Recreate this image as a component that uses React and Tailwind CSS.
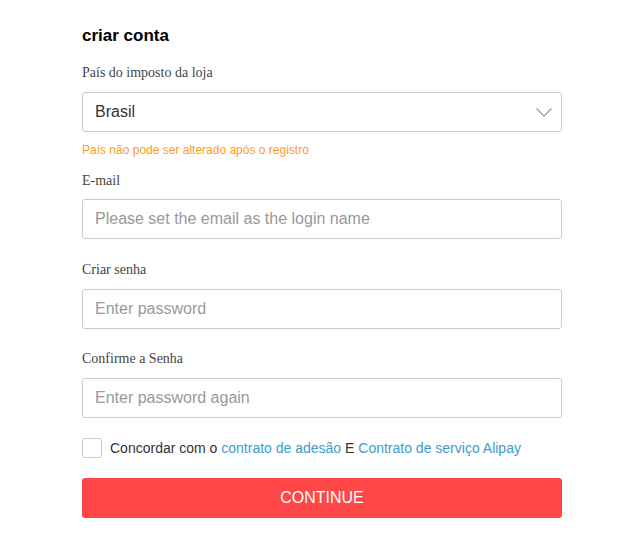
import React from 'react';

const Label = ({ children, className = '' }) => (
  <div className={`h-5 text-[14px] leading-5 text-[#444] font-['Liberation_Serif',serif] ${className}`}>
    {children}
  </div>
);

const Input = ({ placeholder, type = 'text' }) => (
  <input
    type={type}
    placeholder={placeholder}
    className="block w-full h-10 px-3 rounded-[3px] border border-[#c9ccd2] bg-white text-[16px] text-[#333] placeholder:text-[#999] outline-none"
  />
);

export default function App() {
  return (
    <div className="min-h-screen bg-white font-['Liberation_Sans',Arial,sans-serif]">
      <div className="ml-[82px] w-[480px] pt-[24px]">
        <h1 className="h-6 text-[17px] leading-6 font-bold text-black">criar conta</h1>

        <Label className="mt-[15px]">País do imposto da loja</Label>
        <div className="mt-[9px] flex h-10 items-center justify-between rounded-[3px] border border-[#c9ccd2] pl-3 pr-[9px]">
          <span className="text-[16px] text-[#333]">Brasil</span>
          <svg width="16" height="9" viewBox="0 0 16 9" fill="none">
            <path d="M0.5 0.5l7.5 7.5 7.5-7.5" stroke="#9aa0a8" strokeWidth="1.3" />
          </svg>
        </div>
        <div className="mt-[10px] h-4 text-[12px] leading-4 text-[#ff9a1f]">
          País não pode ser alterado após o registro
        </div>

        <Label className="mt-[13px]">E-mail</Label>
        <div className="mt-[8px]">
          <Input placeholder="Please set the email as the login name" />
        </div>

        <Label className="mt-[21px]">Criar senha</Label>
        <div className="mt-[9px]">
          <Input type="password" placeholder="Enter password" />
        </div>

        <Label className="mt-[20px]">Confirme a Senha</Label>
        <div className="mt-[9px]">
          <Input type="password" placeholder="Enter password again" />
        </div>

        <label className="mt-5 flex h-5 items-center gap-2 text-[14px] text-[#333]">
          <span className="block h-5 w-5 rounded-[3px] border border-[#c9ccd2] bg-white" />
          <span>
            Concordar com o <a className="text-[#3a9dcc]">contrato de adesão</a> E{' '}
            <a className="text-[#3a9dcc]">Contrato de serviço Alipay</a>
          </span>
        </label>

        <button className="mt-5 flex h-10 w-full items-center justify-center rounded-[3px] bg-[#ff4747] text-[16px] text-white">
          CONTINUE
        </button>
      </div>
    </div>
  );
}
